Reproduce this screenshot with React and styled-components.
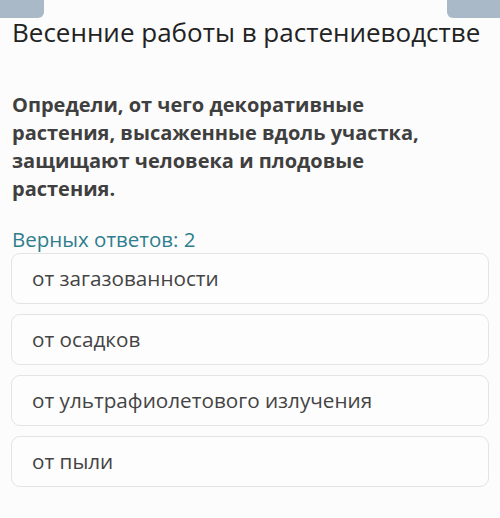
import React from 'react';
import styled, { createGlobalStyle } from 'styled-components';

const GlobalStyle = createGlobalStyle`
  html, body {
    margin: 0;
    padding: 0;
    background: #fcfcfc;
    font-family: "Open Sans", "Noto Sans", sans-serif;
  }
`;

const Page = styled.div`
  position: relative;
  width: 500px;
  height: 518px;
  overflow: hidden;
  background: #fcfcfc;
  padding: 16px 21px 0 12px;
  box-sizing: border-box;
`;

const NavButton = styled.div`
  position: absolute;
  top: 0;
  ${p => (p.side === 'left' ? 'left: 0;' : 'right: 0;')}
  width: ${p => (p.side === 'left' ? '44px' : '53px')};
  height: 18px;
  background: #a9b9c8;
  border-radius: ${p => (p.side === 'left' ? '0 0 6px 0' : '0 0 0 6px')};
`;

const Title = styled.h1`
  margin: 0;
  font-size: 26px;
  font-weight: 400;
  line-height: 32px;
  color: #222;
  white-space: nowrap;
`;

const Question = styled.p`
  margin: 43px 0 0;
  font-size: 20px;
  font-weight: 700;
  line-height: 28px;
  color: #3f3f3f;
  max-width: 420px;
`;

const Counter = styled.div`
  margin-top: 24px;
  font-size: 20.5px;
  line-height: 24px;
  color: #2f7e8d;
`;

const Options = styled.div`
  display: flex;
  flex-direction: column;
  gap: 10px;
  margin: 2px -10px 0 -1px;
`;

const Option = styled.div`
  display: flex;
  align-items: center;
  height: 51px;
  box-sizing: border-box;
  padding: 0 20px 1px;
  border: 1.5px solid #e4e4e4;
  border-radius: 9px;
  background: #fdfdfd;
  font-size: 20.7px;
  color: #444;
`;

const answers = [
  'от загазованности',
  'от осадков',
  'от ультрафиолетового излучения',
  'от пыли',
];

export default function App() {
  return (
    <>
      <GlobalStyle />
      <Page>
        <NavButton side="left" />
        <NavButton side="right" />
        <Title>Весенние работы в растениеводстве</Title>
        <Question>
          Определи, от чего декоративные растения, высаженные вдоль участка,
          защищают человека и плодовые растения.
        </Question>
        <Counter>Верных ответов: 2</Counter>
        <Options>
          {answers.map(a => (
            <Option key={a}>{a}</Option>
          ))}
        </Options>
      </Page>
    </>
  );
}
